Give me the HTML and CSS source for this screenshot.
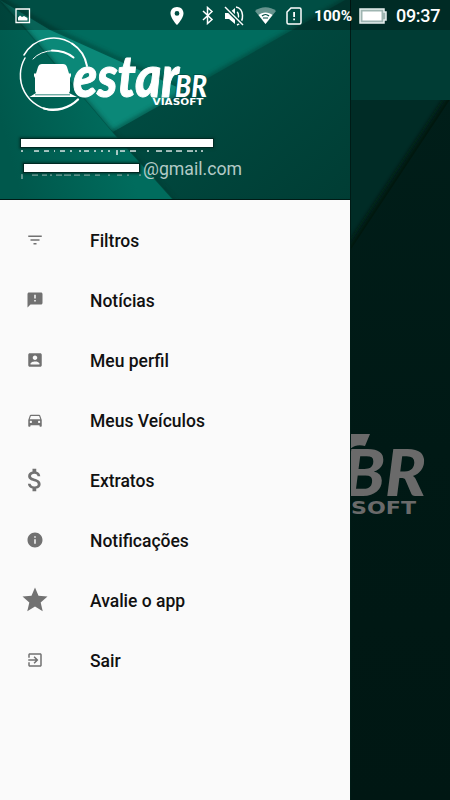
FILE: index.html
```
<!DOCTYPE html>
<html lang="pt-BR">
<head>
    <meta charset="UTF-8">
    <meta name="viewport" content="width=device-width, initial-scale=1.0">
    <title>EstarBR</title>
    <link rel="stylesheet" href="styles.css">
</head>
<body>
    <div class="status-bar">
        <svg class="picture-icon" width="16" height="16" viewBox="0 0 16 16">
            <path d="M1 1h13.500v13.500H1z" fill="none" stroke="#fff" stroke-width="1.300"/>
            <path d="M3 12.500V9.500l2-2 2 1.500 2-1 3.500 2v2.500z"/>
        </svg>
        <div class="status-icons">
            <svg width="14" height="18" viewBox="0 0 14 18"><path fill-rule="evenodd" d="M7 0C3 0 .500 2.800.500 6.400.500 11 7 18 7 18s6.500-7 6.500-11.600C13.500 2.800 11 0 7 0zm0 4a2.400 2.400 0 1 1 0 4.800A2.400 2.400 0 0 1 7 4z"/></svg>
            <svg width="12" height="19" viewBox="0 0 12 19"><path class="line" d="M1 5l9 8.500-4.500 4V1.500l4.500 4L1 14"/></svg>
            <svg width="21" height="20" viewBox="0 0 21 20">
                <path d="M1 7h4l6-5v16l-6-5H1z"/>
                <path class="line" d="M13 6c2 1 2 7 0 8M12 1c8 1 9 15 1 18"/>
                <path d="M1 1l18 18" stroke="#004d43" stroke-width="4"/>
                <path class="line" d="M1 1l18 18"/>
            </svg>
            <svg width="21" height="17" viewBox="0 0 21 17">
                <path opacity=".4" d="M0 4C6-1 15-1 21 4L10.500 17z"/>
                <path d="M3.500 8c4-3.500 10-3.500 14 0l-7 9z"/>
                <path d="M7 9c2-2 5-2 7 0M8 11h5" fill="none" stroke="#004d43" stroke-width="1.200"/>
            </svg>
            <svg width="16" height="18" viewBox="0 0 16 18">
                <path class="line" d="M5 1h8.500Q15 1 15 2.500v13q0 1.500-1.500 1.500h-11Q1 17 1 15.500V5z"/>
                <path d="M7.200 5h1.800v5H7.200zM7.200 11.500h1.800v1.800H7.200z"/>
            </svg>
        </div>
        <span class="battery-level">100%</span>
        <svg class="battery" width="28" height="16" viewBox="0 0 28 16">
            <path d="M1 1h24v3h2v8h-2v3H1z" fill="#9fb5b1" stroke="#e8efee" stroke-width="1.500"/>
            <path d="M3.500 3.500h19v9h-19z"/>
        </svg>
        <span class="clock">09:37</span>
    </div>

    <div class="app">
        <nav class="drawer">
            <header class="drawer-header">
                <svg class="art" width="350" height="199" viewBox="0 0 350 199">
                    <defs>
                        <linearGradient id="left" gradientUnits="userSpaceOnUse" x1="0" y1="120" x2="110" y2="90">
                            <stop offset="0" stop-color="#00584c"/>
                            <stop offset="1" stop-color="#006c5d"/>
                        </linearGradient>
                        <linearGradient id="right" x1="0" y1="0" x2="1" y2="1">
                            <stop offset="0" stop-color="#005147"/>
                            <stop offset="1" stop-color="#003d34"/>
                        </linearGradient>
                        <filter id="soft" x="-10%" y="-10%" width="120%" height="120%">
                            <feGaussianBlur stdDeviation="2"/>
                        </filter>
                    </defs>
                    <rect width="350" height="199" fill="#006c5e"/>
                    <path class="shadow" d="M0-2L50 28 188 91"/>
                    <path d="M0 0L50 30 188 92 113 132 27 30z" fill="#0b8878"/>
                    <path d="M345 0L113 132 173 199H350V0z" class="shadow"/>
                    <path d="M345 0L113 132 173 199H350V0z" fill="url(#right)"/>
                    <path class="shadow" d="M0 0L27 32 113 133 175 202"/>
                    <path d="M-5-2L27 32 113 133 172 199H-5z" fill="url(#left)"/>
                </svg>

                <svg class="logo" width="196" height="76" viewBox="19 37 196 76" role="img" aria-label="EstarBR Viasoft">
                    <path class="ring" stroke-width="1.500" d="M24 55A34 34 0 0 1 74 45"/>
                    <path class="ring" stroke-width="2" d="M72 43.500A34 34 0 0 1 87 66"/>
                    <path class="ring" stroke-width="1.500" d="M25 58A35 35 0 0 0 53 110.300"/>
                    <path class="ring" stroke-width="2.300" d="M44 108.500A35 35 0 0 0 78 99.500"/>
                    <path class="ring" stroke-width="1" d="M33 59Q40 51 54 50.500"/>
                    <path class="ring" stroke-width="2" d="M52 50.500Q65 50.500 73.500 57.500"/>
                    <path d="M42 64h21q3 0 4 3l2 6.500h2v2.500l-1 2v12q0 2-1 3l8 4H29.500l6.500-4q-1-1-1-3V78l-1-2v-2.500h2l2-6.500q1-3 4-3z"/>
                    <path d="M35 94.800h35" stroke="#006c5d" stroke-width=".8"/>
                    <text class="word estar" x="73" y="96.500" font-size="57" textLength="106" lengthAdjust="spacingAndGlyphs">estar</text>
                    <text class="word br" x="175" y="97" font-size="31" textLength="32" lengthAdjust="spacingAndGlyphs">BR</text>
                    <text class="viasoft" x="152.500" y="105" font-size="9.500" textLength="51" lengthAdjust="spacingAndGlyphs">VIASOFT</text>
                </svg>

                <div class="account">
                    <div class="account-row">
                        <span class="mask name-mask"></span>
                        <svg class="rest" width="185" height="6" viewBox="0 0 185 6">
                            <path d="M1 0v2M13 1h5M23 1h5M33 1h1M39 1h5M50 0v2M59 0v2M63 1h5M74 0v2M81 0v2M88 0v2M96 0v5M99 1h5M109 1h6M127 0v2M135 1h6M145 1h6M155 1h6M166 1h6M175 0v2M181 0v2"/>
                        </svg>
                    </div>
                    <div class="account-row mail-row">
                        <span class="mask mail-mask"></span>
                        <svg class="rest faint" width="122" height="7" viewBox="0 0 122 7">
                            <path d="M1 0v5M11 1h6M21 1h5M30 0v2M35 1h6M43 1h7M53 1h6M63 1h6M74 1h5M88 0v2M96 1h5M107 0v2M119 0v2"/>
                        </svg>
                        <span class="email">@gmail.com</span>
                    </div>
                </div>
            </header>

            <ul class="menu">
                <li>
                    <svg width="18" height="18" viewBox="0 0 24 24"><path d="M10 18h4v-2h-4v2zM3 6v2h18V6H3zm3 7h12v-2H6v2z"/></svg>
                    <span>Filtros</span>
                </li>
                <li>
                    <svg width="18" height="18" viewBox="0 0 24 24"><path d="M20 2H4c-1.100 0-2 .900-2 2v18l4-4h14c1.100 0 2-.900 2-2V4c0-1.100-.900-2-2-2zm-7 12h-2v-2h2v2zm0-4h-2V5h2v5z"/></svg>
                    <span>Notícias</span>
                </li>
                <li>
                    <svg width="18" height="18" viewBox="0 0 24 24"><path d="M3 5v14c0 1.100.890 2 2 2h14c1.100 0 2-.900 2-2V5c0-1.100-.900-2-2-2H5c-1.110 0-2 .900-2 2zm12 4c0 1.660-1.340 3-3 3s-3-1.340-3-3 1.340-3 3-3 3 1.340 3 3zm-9 8c0-2 4-3.100 6-3.100s6 1.100 6 3.100v1H6v-1z"/></svg>
                    <span>Meu perfil</span>
                </li>
                <li>
                    <svg width="18" height="18" viewBox="0 0 24 24"><path d="M18.920 6.010C18.720 5.420 18.160 5 17.500 5h-11c-.660 0-1.210.420-1.420 1.010L3 12v8c0 .550.450 1 1 1h1c.550 0 1-.450 1-1v-1h12v1c0 .550.450 1 1 1h1c.550 0 1-.450 1-1v-8l-2.080-5.990zM6.500 16c-.830 0-1.500-.670-1.500-1.500S5.670 13 6.500 13s1.500.670 1.500 1.500S7.330 16 6.500 16zm11 0c-.830 0-1.500-.670-1.500-1.500s.670-1.500 1.500-1.500 1.500.670 1.500 1.500-.670 1.500-1.500 1.500zM5 11l1.500-4.500h11L19 11H5z"/></svg>
                    <span>Meus Veículos</span>
                </li>
                <li>
                    <svg width="30" height="30" viewBox="0 0 24 24"><path d="M11.800 10.900c-2.270-.590-3-1.200-3-2.150 0-1.090 1.010-1.850 2.700-1.850 1.780 0 2.440.850 2.500 2.100h2.210c-.070-1.720-1.120-3.300-3.210-3.810V3h-3v2.160c-1.940.420-3.500 1.680-3.500 3.610 0 2.310 1.910 3.460 4.700 4.130 2.500.600 3 1.480 3 2.410 0 .690-.490 1.790-2.700 1.790-2.060 0-2.870-.920-2.980-2.100h-2.200c.120 2.190 1.760 3.420 3.680 3.830V21h3v-2.150c1.950-.370 3.500-1.500 3.500-3.550 0-2.840-2.430-3.810-4.700-4.400z"/></svg>
                    <span>Extratos</span>
                </li>
                <li>
                    <svg width="18" height="18" viewBox="0 0 24 24"><path d="M12 2C6.480 2 2 6.480 2 12s4.480 10 10 10 10-4.480 10-10S17.520 2 12 2zm1 15h-2v-6h2v6zm0-8h-2V7h2v2z"/></svg>
                    <span>Notificações</span>
                </li>
                <li>
                    <svg width="30" height="30" viewBox="0 0 24 24"><path d="M12 17.270L18.180 21l-1.640-7.030L22 9.240l-7.190-.610L12 2 9.190 8.630 2 9.240l5.460 4.730L5.820 21z"/></svg>
                    <span>Avalie o app</span>
                </li>
                <li>
                    <svg width="18" height="18" viewBox="0 0 24 24"><path d="M10.090 15.590L11.500 17l5-5-5-5-1.410 1.410L12.670 11H3v2h9.670l-2.580 2.590zM19 3H5c-1.110 0-2 .900-2 2v4h2V5h14v14H5v-4H3v4c0 1.100.890 2 2 2h14c1.100 0 2-.900 2-2V5c0-1.100-.900-2-2-2z"/></svg>
                    <span>Sair</span>
                </li>
            </ul>
        </nav>

        <!-- dimmed screen behind the drawer -->
        <main class="backdrop">
            <div class="toolbar"></div>
            <svg class="splash" width="99" height="700" viewBox="351 100 99 700">
                <defs>
                    <linearGradient id="deep" x1="0" y1="0" x2="0" y2="1">
                        <stop offset="0" stop-color="#001e19"/>
                        <stop offset=".5" stop-color="#001915"/>
                        <stop offset="1" stop-color="#001713"/>
                    </linearGradient>
                    <filter id="edge" filterUnits="userSpaceOnUse" x="300" y="60" width="200" height="800">
                        <feGaussianBlur stdDeviation="2.500"/>
                    </filter>
                </defs>
                <rect x="350" y="100" width="100" height="700" fill="#002c26"/>
                <path d="M447 95L340 257V820H470V95z" fill="#001510" filter="url(#edge)"/>
                <path d="M453 95L340 266V800H453V95z" fill="url(#deep)"/>
                <path d="M350 434h20l-5 12c-7-2-11 0-15 3z" fill="#6a6a6a"/>
                <text class="word dim" x="343" y="496" font-size="65" textLength="83" lengthAdjust="spacingAndGlyphs">BR</text>
                <text class="viasoft dim" x="351" y="513.500" font-size="17" textLength="65" lengthAdjust="spacingAndGlyphs">SOFT</text>
            </svg>
        </main>
    </div>
</body>
</html>
```
FILE: styles.css
```
* {
    box-sizing: border-box;
}

body {
    margin: 0;
    width: 450px;
    height: 800px;
    overflow: hidden;
    position: relative;
    font-family: Roboto, sans-serif;
    background-color: #001915;
}

.app {
    display: flex;
    height: 800px;
}

/* Status bar */
.status-bar {
    position: absolute;
    top: 0;
    left: 0;
    z-index: 2;
    display: flex;
    align-items: center;
    width: 450px;
    height: 30px;
    padding: 1px 9px 0 15px;
    background-color: rgba(0, 0, 0, 0.27);
    color: #fff;
}

.status-bar svg {
    display: block;
    fill: #fff;
}

.status-bar .line {
    fill: none;
    stroke: #fff;
    stroke-width: 1.5;
}

.status-icons {
    display: flex;
    align-items: center;
    gap: 10px;
    margin-left: auto;
}

.status-icons svg:first-child {
    margin-right: 8px;
}

.battery-level {
    width: 38px;
    margin-left: 12px;
    font-size: 15.5px;
    font-weight: 700;
}

.battery {
    margin-left: 7px;
}

.clock {
    width: 45px;
    margin-left: 9px;
    font-size: 18px;
    font-weight: 500;
    letter-spacing: -0.3px;
}

/* Drawer */
.drawer {
    width: 350px;
    background-color: #fafafa;
}

.drawer-header {
    position: relative;
    height: 200px;
    padding: 37px 19px 0;
    border-bottom: 1px solid #001b16;
}

.art {
    position: absolute;
    top: 0;
    left: 0;
}

.shadow {
    fill: none;
    stroke: #00382f;
    stroke-width: 4;
    opacity: 0.6;
    filter: url(#soft);
}

.logo {
    position: relative;
    display: block;
    fill: #fff;
}

.ring {
    fill: none;
    stroke: #fff;
    stroke-linecap: round;
}

.word {
    font-family: Lato, sans-serif;
    font-weight: 900;
    font-style: italic;
}

.estar {
    stroke: #fff;
    stroke-width: 1px;
}

.br {
    stroke: #005147;
    stroke-width: 2px;
    paint-order: stroke;
}

.viasoft {
    font-family: "DejaVu Sans", sans-serif;
    font-weight: 700;
}

.account {
    position: relative;
    padding-top: 26px;
}

.account-row {
    height: 20px;
    padding-left: 2px;
}

.mask {
    display: block;
    height: 8px;
    background-color: #fff;
    box-shadow: 0 0 0 1px #002a23, 0 0 2px 2px #003d34;
    position: relative;
}

.name-mask {
    width: 192px;
}

.rest {
    display: block;
    margin-top: 3px;
    fill: none;
    stroke: #dfe9e7;
    stroke-width: 1.5;
}

.mail-row {
    display: grid;
    grid-template-columns: 122px 1fr;
    grid-template-rows: 9px 8px;
    height: 26px;
    padding-top: 5px;
}

.mail-mask {
    width: 115px;
    margin-left: 3px;
}

.faint {
    grid-row: 2;
    margin-top: 1px;
    stroke: #7fa8a2;
}

.email {
    grid-column: 2;
    grid-row: 1 / 3;
    margin-top: -5px;
    color: #b2cac6;
    font-size: 17.7px;
    line-height: 20px;
}

/* Menu */
.menu {
    margin: 0;
    padding: 10px 0 0;
    list-style: none;
}

.menu li {
    display: flex;
    align-items: center;
    height: 60px;
    padding-left: 20px;
    font-size: 17.5px;
    font-weight: 500;
    color: #111;
}

.menu svg {
    flex: none;
    width: 30px;
    fill: #717171;
}

.menu span {
    margin-left: 40px;
    padding-top: 1px;
}

/* Screen behind the drawer */
.backdrop {
    width: 100px;
    border-left: 1px solid #001b16;
}

.toolbar {
    height: 100px;
    background-color: #003c34;
}

.splash {
    display: block;
}

.dim {
    fill: #6a6a6a;
}
```
